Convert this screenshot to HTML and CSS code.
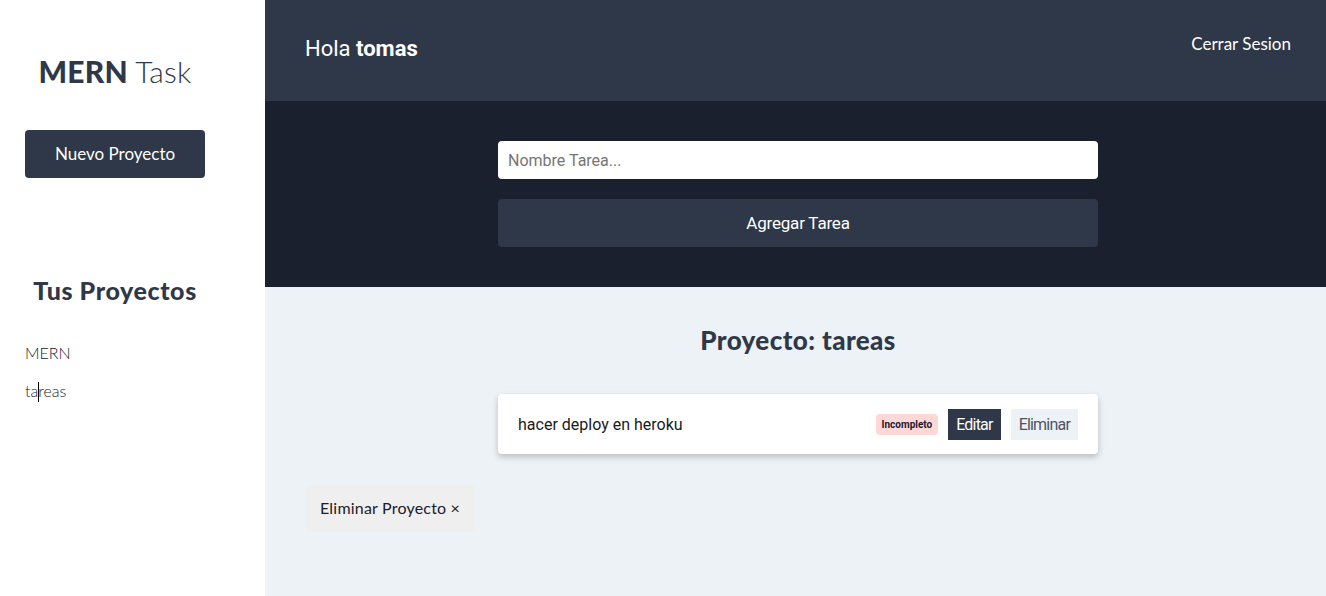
FILE: index.html
```html
<!DOCTYPE html>
<html lang="es">
<head>
<meta charset="utf-8">
<title>MERN Task</title>
<link rel="stylesheet" href="styles.css">
</head>
<body>
<div class="app">
  <aside class="sidebar">
    <h1 class="logo"><b>MERN</b> Task</h1>
    <button class="btn-new">Nuevo Proyecto</button>
    <h2 class="projects-title">Tus Proyectos</h2>
    <ul class="project-list">
      <li>MERN</li>
      <li>ta<span class="caret"></span>reas</li>
    </ul>
  </aside>
  <main class="main">
    <header class="topbar">
      <p class="greeting">Hola <b>tomas</b></p>
      <span class="logout">Cerrar Sesion</span>
    </header>
    <section class="form-area">
      <form class="task-form">
        <input class="task-input" type="text" placeholder="Nombre Tarea...">
        <button class="btn-add" type="button">Agregar Tarea</button>
      </form>
    </section>
    <section class="content">
      <h2 class="project-title">Proyecto: tareas</h2>
      <ul class="task-list">
        <li class="task">
          <span class="task-name">hacer deploy en heroku</span>
          <div class="task-actions">
            <span class="badge">Incompleto</span>
            <button class="btn-edit">Editar</button>
            <button class="btn-del">Eliminar</button>
          </div>
        </li>
      </ul>
      <button class="btn-del-project">Eliminar Proyecto &times;</button>
    </section>
  </main>
</div>
</body>
</html>
```
FILE: styles.css
```css
* { box-sizing: border-box; }
html, body { margin: 0; padding: 0; height: 100%; }
body { font-family: "Lato", sans-serif; color: #2f3848; }

.app { display: flex; min-height: 596px; }

.sidebar {
  width: 265px;
  flex-shrink: 0;
  background: #fff;
  padding: 53px 0 0 25px;
}
.sidebar > * { width: 180px; }
.logo {
  margin: 0;
  font-size: 30px;
  line-height: 36px;
  text-align: center;
  font-weight: 300;
  color: #2f3848;
  letter-spacing: 0.2px;
}
.logo b { font-weight: 900; }
.btn-new {
  display: block;
  margin-top: 41px;
  height: 48px;
  padding-bottom: 3px;
  background: #2f3848;
  color: #fff;
  border: 0;
  border-radius: 4px;
  font-family: "Lato", sans-serif;
  font-size: 17px;
  cursor: pointer;
}
.projects-title {
  margin: 97px 0 0;
  font-size: 25px;
  line-height: 30px;
  font-weight: 900;
  text-align: center;
  color: #2f3848;
  letter-spacing: 0.6px;
  white-space: nowrap;
}
.project-list {
  list-style: none;
  margin: 38px 0 0;
  padding: 0;
}
.project-list li {
  font-size: 16px;
  line-height: 20px;
  font-weight: 300;
  color: #1a202d;
  margin-bottom: 18px;
}
.caret {
  display: inline-block;
  width: 1px;
  height: 20px;
  background: #000;
  vertical-align: -5px;
  margin-right: -1px;
}

.main { flex: 1; display: flex; flex-direction: column; background: #edf2f6; }

.topbar {
  height: 101px;
  background: #2f3848;
  display: flex;
  justify-content: space-between;
  align-items: center;
  padding: 0 35px 0 40px;
}
.greeting {
  margin: 0 0 5px;
  font-family: "Roboto", sans-serif;
  font-size: 22px;
  color: #fff;
}
.greeting b { font-weight: 700; }
.logout {
  color: #fff;
  font-size: 17px;
  margin-bottom: 14px;
}

.form-area {
  background: #1a202d;
  padding: 40px 0 40px 5px;
}
.task-form {
  width: 600px;
  margin: 0 auto;
  display: flex;
  flex-direction: column;
  gap: 20px;
}
.task-input {
  height: 38px;
  border: 0;
  border-radius: 4px;
  padding: 0 10px;
  font-family: "Roboto", sans-serif;
  font-size: 16px;
  color: #333;
}
.task-input::placeholder { color: #757575; }
.btn-add {
  height: 48px;
  background: #2f3848;
  color: #fff;
  border: 0;
  border-radius: 4px;
  font-family: "Roboto", sans-serif;
  font-size: 17px;
  letter-spacing: -0.2px;
}

.content { padding: 37px 36px 0 41px; }
.project-title {
  margin: 0;
  text-align: center;
  font-size: 26px;
  line-height: 32px;
  font-weight: 900;
  color: #2f3848;
  letter-spacing: 0.4px;
}
.task-list {
  list-style: none;
  width: 600px;
  margin: 38px auto 0;
  padding: 0;
}
.task {
  height: 60px;
  background: #fff;
  border-radius: 4px;
  box-shadow: 0 3px 6px rgba(0,0,0,0.22);
  display: flex;
  align-items: center;
  justify-content: space-between;
  padding: 0 20px;
}
.task-name {
  font-family: "Roboto", sans-serif;
  font-size: 16px;
  color: #1a1a1a;
}
.task-actions { display: flex; align-items: center; }
.badge {
  background: #fed7d7;
  color: #1a202d;
  font-family: "Roboto", sans-serif;
  font-size: 10px;
  font-weight: 700;
  padding: 5px 6px;
  border-radius: 4px;
  line-height: 11px;
  margin-right: 10px;
}
.btn-edit, .btn-del {
  height: 31px;
  border: 0;
  font-family: "Roboto", sans-serif;
  font-size: 16px;
  padding: 0 8px;
  letter-spacing: -0.8px;
}
.btn-edit { background: #2f3848; color: #fff; margin-right: 10px; }
.btn-del { background: #edf2f6; color: #4a5568; }

.btn-del-project {
  margin-top: 31px;
  height: 47px;
  padding: 0 15px 3px 14px;
  background: #efefef;
  border: 0;
  font-family: "Lato", sans-serif;
  font-size: 16px;
  color: #1a202d;
  letter-spacing: 0.2px;
}
```
